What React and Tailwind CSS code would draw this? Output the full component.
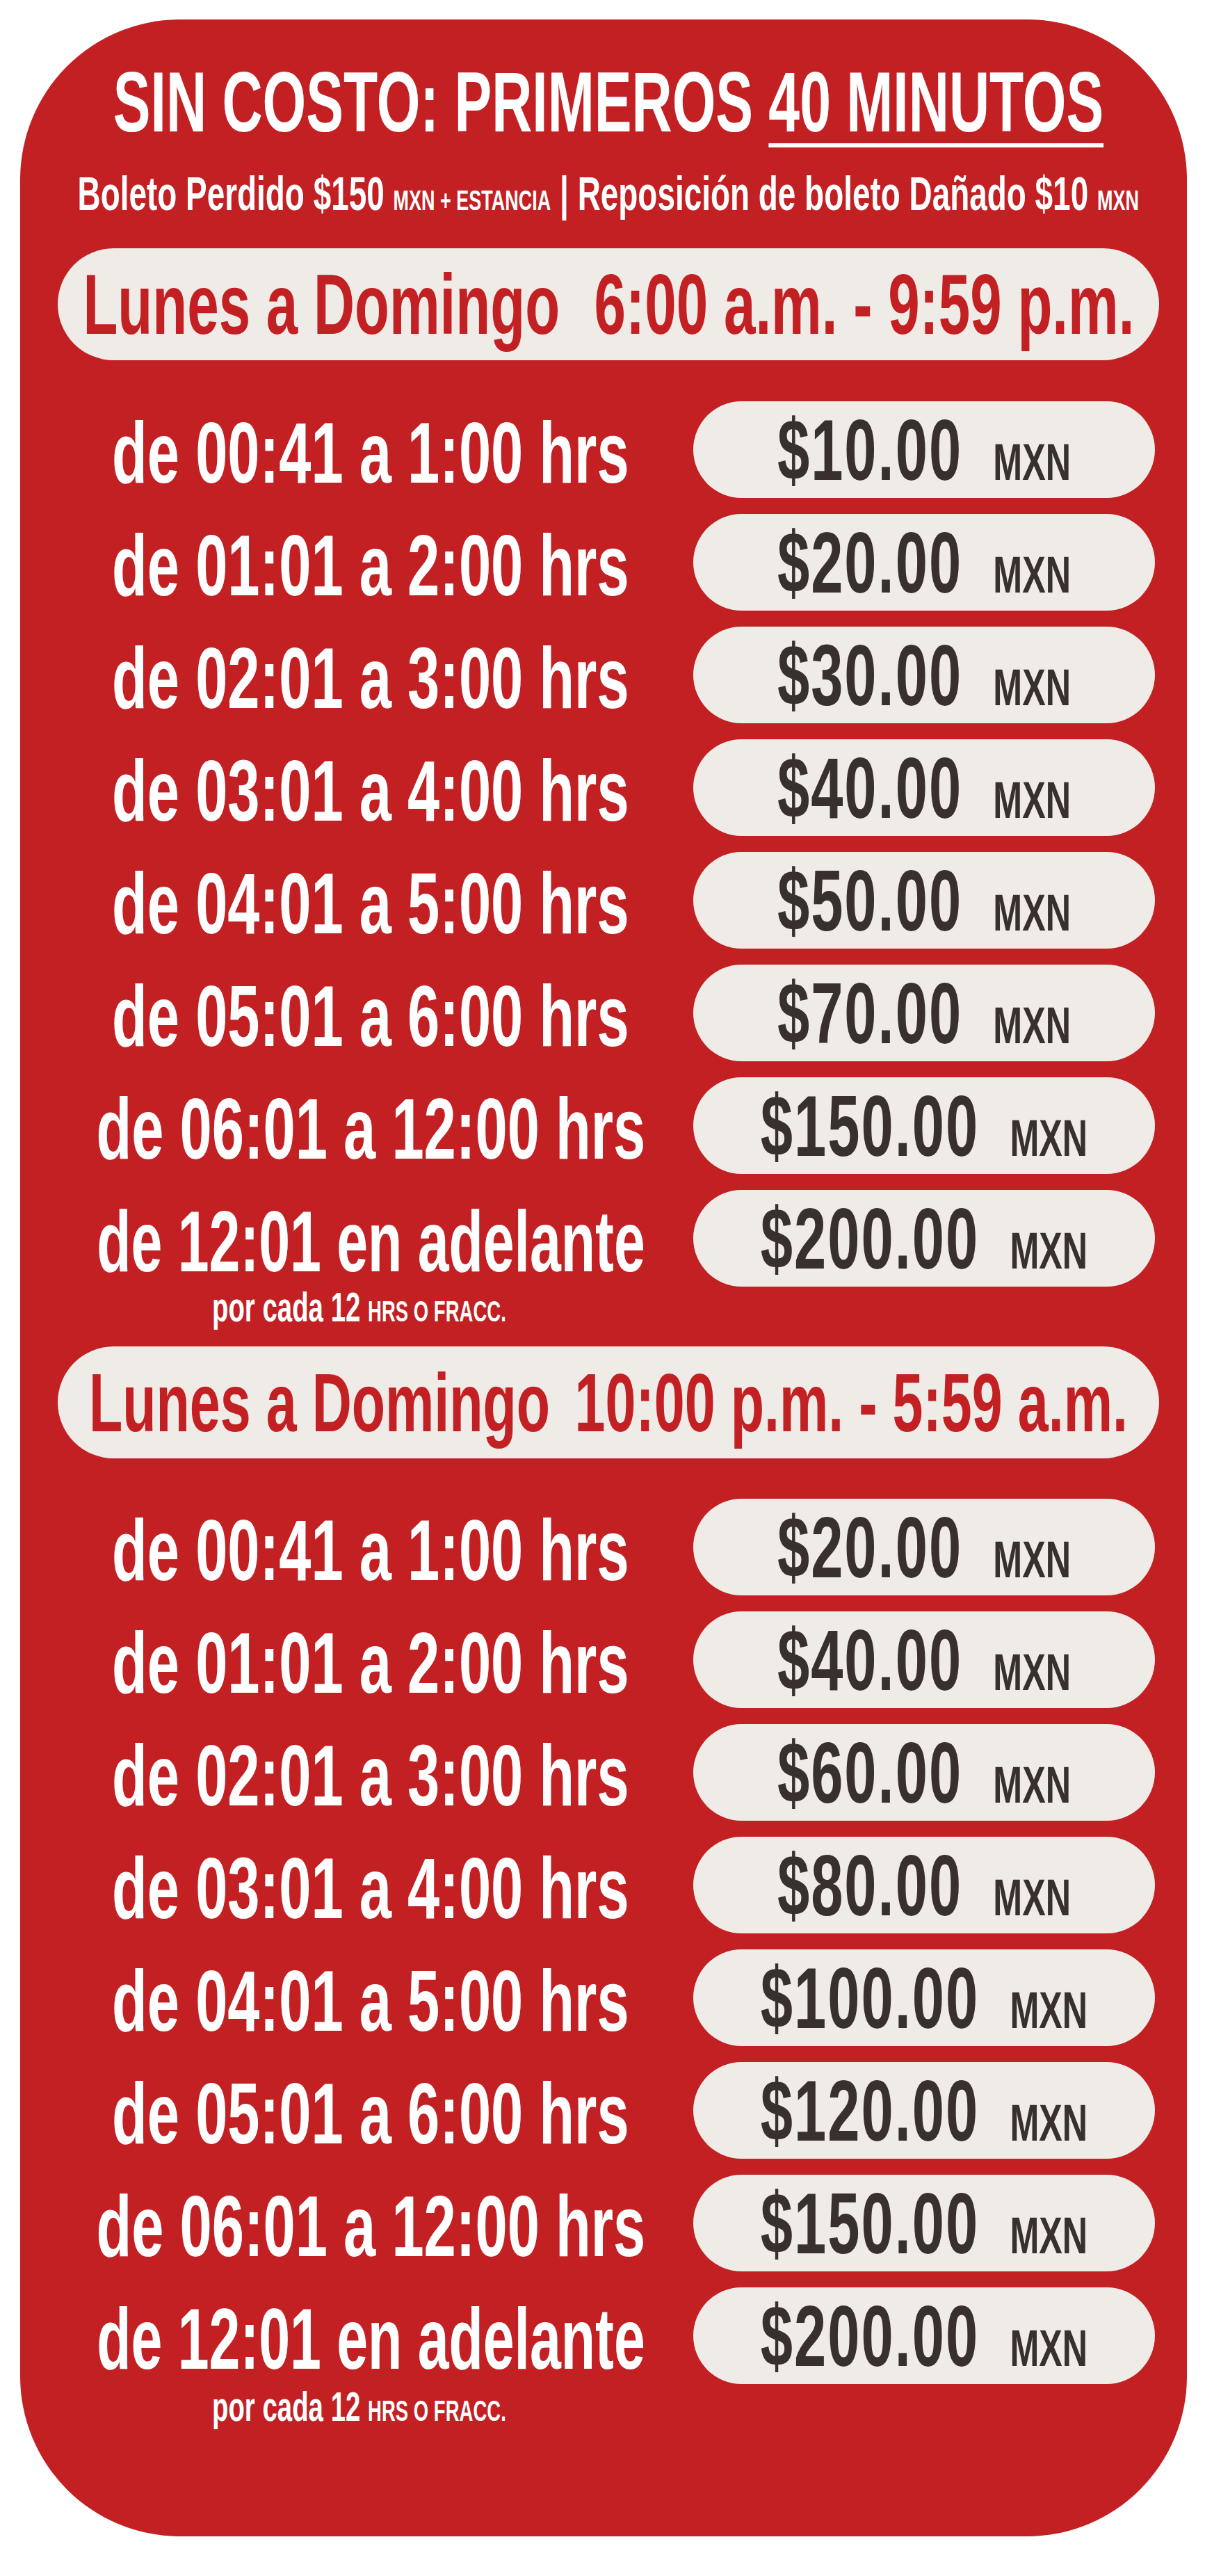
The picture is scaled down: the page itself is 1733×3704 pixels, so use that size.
const dayRates = [
  ["de 00:41 a 1:00 hrs", "$10.00"],
  ["de 01:01 a 2:00 hrs", "$20.00"],
  ["de 02:01 a 3:00 hrs", "$30.00"],
  ["de 03:01 a 4:00 hrs", "$40.00"],
  ["de 04:01 a 5:00 hrs", "$50.00"],
  ["de 05:01 a 6:00 hrs", "$70.00"],
  ["de 06:01 a 12:00 hrs", "$150.00"],
  ["de 12:01 en adelante", "$200.00"],
];

const nightRates = [
  ["de 00:41 a 1:00 hrs", "$20.00"],
  ["de 01:01 a 2:00 hrs", "$40.00"],
  ["de 02:01 a 3:00 hrs", "$60.00"],
  ["de 03:01 a 4:00 hrs", "$80.00"],
  ["de 04:01 a 5:00 hrs", "$100.00"],
  ["de 05:01 a 6:00 hrs", "$120.00"],
  ["de 06:01 a 12:00 hrs", "$150.00"],
  ["de 12:01 en adelante", "$200.00"],
];

function HeaderPill({ days, hours, gap, size }) {
  return (
    <div className="w-[1584px] h-[161px] shrink-0 rounded-full bg-[#efebe7] flex items-center justify-center">
      <span className={"inline-block whitespace-nowrap scale-x-[0.67] leading-none text-[#c22023] " + size}>
        {days}
        <span className={gap}>{hours}</span>
      </span>
    </div>
  );
}

function RateRow({ label, price }) {
  const long = label.includes("adelante");
  return (
    <div className="flex items-center gap-[29px]">
      <div className="w-[870px] flex justify-center pt-[8px]">
        <span
          className={
            "inline-block whitespace-nowrap text-[124px] leading-none text-white " +
            (long ? "scale-x-[0.65]" : "scale-x-[0.67]")
          }
        >
          {label}
        </span>
      </div>
      <div className="w-[664px] h-[139px] rounded-full bg-[#efebe7] flex items-center justify-center">
        <div className="flex items-baseline whitespace-nowrap scale-x-[0.67] text-[#38302e]">
          <span className="text-[124px] leading-none tracking-[3px]">{price}</span>
          <span className="ml-[66px] text-[75px] leading-none">MXN</span>
        </div>
      </div>
    </div>
  );
}

function RateList({ rates }) {
  return (
    <div className="flex flex-col gap-[23px] ml-[9px]">
      {rates.map(([label, price]) => (
        <RateRow key={label} label={label} price={price} />
      ))}
    </div>
  );
}

function PerTwelve({ className }) {
  return (
    <div className={"w-[870px] flex justify-center pr-[34px] self-start ml-[9px] " + className}>
      <span className="inline-block whitespace-nowrap scale-x-[0.64] text-[60px] leading-none text-white">
        por cada 12 <span className="text-[43px]">HRS O FRACC.</span>
      </span>
    </div>
  );
}

export default function App() {
  return (
    <div className="w-[1733px] h-[3704px] bg-white pt-[28px] pl-[29px] font-['Liberation_Sans',Arial,sans-serif] font-bold">
      <div className="w-[1678px] h-[3619px] rounded-[230px] bg-[#c22023] overflow-hidden flex flex-col items-center pl-[14px] pt-[58px]">
        <h1 className="shrink-0 whitespace-nowrap scale-x-[0.66] text-[122px] leading-none text-white">
          SIN COSTO: PRIMEROS{" "}
          <span className="underline decoration-[6px] underline-offset-[17px]">40 MINUTOS</span>
        </h1>

        <p className="mt-[36px] shrink-0 whitespace-nowrap scale-x-[0.675] text-[68px] leading-none text-white">
          Boleto Perdido $150 <span className="text-[40px] leading-none">MXN + ESTANCIA</span> | Reposición de
          boleto Dañado $10 <span className="text-[40px] leading-none">MXN</span>
        </p>

        <div className="mt-[45px]">
          <HeaderPill days="Lunes a Domingo " hours="6:00 a.m. - 9:59 p.m." gap="ml-[40px]" size="text-[122px]" />
        </div>

        <div className="mt-[59px] flex flex-col">
          <RateList rates={dayRates} />
          <PerTwelve className="" />
        </div>

        <div className="mt-[26px]">
          <HeaderPill days="Lunes a Domingo " hours="10:00 p.m. - 5:59 a.m." gap="ml-[20px]" size="text-[118px]" />
        </div>

        <div className="mt-[58px] flex flex-col">
          <RateList rates={nightRates} />
          <PerTwelve className="mt-[3px]" />
        </div>
      </div>
    </div>
  );
}
